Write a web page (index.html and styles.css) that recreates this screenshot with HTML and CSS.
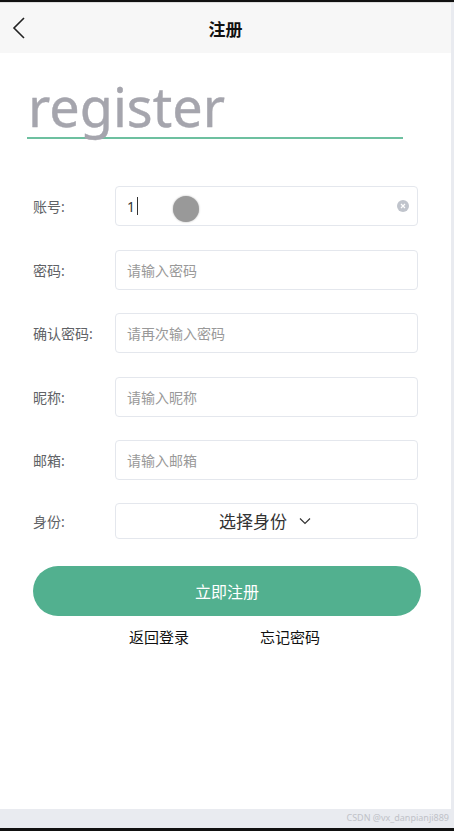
FILE: index.html
```html
<!DOCTYPE html>
<html lang="zh-CN">
<head>
    <meta charset="UTF-8">
    <meta name="viewport" content="width=device-width, initial-scale=1.0">
    <title>注册</title>
    <link rel="stylesheet" href="styles.css">
</head>
<body>
    <div class="screen">
        <div class="topbar"></div>
        <div class="phone">
            <div class="header">
                <span class="back">
                    <svg width="14" height="22" viewBox="0 0 14 22"><path d="M12 1 L2 11 L12 21" fill="none" stroke="#222" stroke-width="1.6"/></svg>
                </span>
                <h1>注册</h1>
            </div>

            <div class="content">
                <div class="title">register</div>

                <form class="form">
                    <div class="row">
                        <label>账号:</label>
                        <div class="input filled">
                            <span class="value">1</span><span class="caret"></span>
                            <span class="clear">
                                <svg width="12" height="12" viewBox="0 0 12 12"><circle cx="6" cy="6" r="6" fill="#c0c4cc"/><path d="M4 4 L8 8 M8 4 L4 8" stroke="#fff" stroke-width="1.2"/></svg>
                            </span>
                            <span class="touch"></span>
                        </div>
                    </div>
                    <div class="row">
                        <label>密码:</label>
                        <div class="input">请输入密码</div>
                    </div>
                    <div class="row">
                        <label>确认密码:</label>
                        <div class="input">请再次输入密码</div>
                    </div>
                    <div class="row">
                        <label>昵称:</label>
                        <div class="input">请输入昵称</div>
                    </div>
                    <div class="row">
                        <label>邮箱:</label>
                        <div class="input">请输入邮箱</div>
                    </div>
                    <div class="row select-row">
                        <label>身份:</label>
                        <div class="input select">
                            选择身份
                            <svg width="12" height="8" viewBox="0 0 12 8"><path d="M1 1.5 L6 6.5 L11 1.5" fill="none" stroke="#333" stroke-width="1.2"/></svg>
                        </div>
                    </div>
                </form>

                <button class="submit">立即注册</button>

                <div class="links">
                    <a>返回登录</a>
                    <a>忘记密码</a>
                </div>
            </div>
        </div>
        <div class="footer">CSDN @vx_danpianji889</div>
        <div class="bottombar"></div>
    </div>
</body>
</html>
```

FILE: styles.css
```css
* {
    box-sizing: border-box;
}
body {
    margin: 0;
    font-family: "Noto Sans", "Noto Sans CJK SC", sans-serif;
    background-color: #e9ebf0;
}
.screen {
    width: 454px;
    height: 831px;
    display: flex;
    flex-direction: column;
}
.topbar {
    height: 3px;
    background-color: #111;
    border-bottom: 1px solid #ddd;
}
.phone {
    width: 451px;
    height: 806px;
    background-color: #fff;
    display: flex;
    flex-direction: column;
}
.header {
    height: 50px;
    background-color: #f7f7f7;
    display: flex;
    align-items: center;
    justify-content: center;
    position: relative;
}
.header h1 {
    margin: 0;
    font-size: 17px;
    font-weight: bold;
    color: #111;
}
.back {
    position: absolute;
    left: 12px;
    top: 14px;
}
.content {
    padding: 22px 30px 0 33px;
}
.title {
    width: 376px;
    margin-left: -6px;
    padding-left: 1px;
    font-size: 54px;
    line-height: 62px;
    color: #a5a5ad;
    border-bottom: 2px solid #6dc0a0;
    -webkit-text-stroke: 0.4px #a5a5ad;
}
.form {
    margin-top: 47px;
}
.row {
    display: flex;
    align-items: center;
    height: 40px;
    margin-bottom: 23.5px;
}
.row label {
    width: 82px;
    font-size: 14px;
    color: #606266;
}
.input {
    position: relative;
    width: 303px;
    height: 40px;
    border: 1px solid #e4e7ed;
    border-radius: 4px;
    padding: 0 11px;
    display: flex;
    align-items: center;
    font-size: 14px;
    color: #999;
}
.input.filled {
    color: #333;
}
.caret {
    width: 1px;
    height: 18px;
    margin-left: 2px;
    background-color: #333;
}
.clear {
    position: absolute;
    right: 8px;
    top: 13px;
    display: flex;
}
.touch {
    position: absolute;
    left: 57px;
    top: 9px;
    width: 26px;
    height: 26px;
    border-radius: 50%;
    background-color: #999;
    box-shadow: 0 0 2px #aaa;
}
.select-row {
    height: 36px;
    margin-top: -1px;
    margin-bottom: 27px;
}
.input.select {
    height: 36px;
    justify-content: center;
    gap: 12px;
    padding-left: 8px;
    font-size: 17px;
    color: #333;
}
.submit {
    display: block;
    width: 388px;
    height: 50px;
    border: none;
    border-radius: 25px;
    background-color: #52b08f;
    color: #fff;
    font-family: inherit;
    font-size: 16px;
}
.links {
    display: flex;
    gap: 71px;
    margin-top: 10px;
    padding-left: 96px;
    font-size: 15px;
    color: #111;
}
.footer {
    flex: 1;
    padding-right: 5px;
    text-align: right;
    font-size: 9px;
    line-height: 18px;
    color: #c0c2c8;
}
.bottombar {
    height: 3px;
    background-color: #111;
}
```
